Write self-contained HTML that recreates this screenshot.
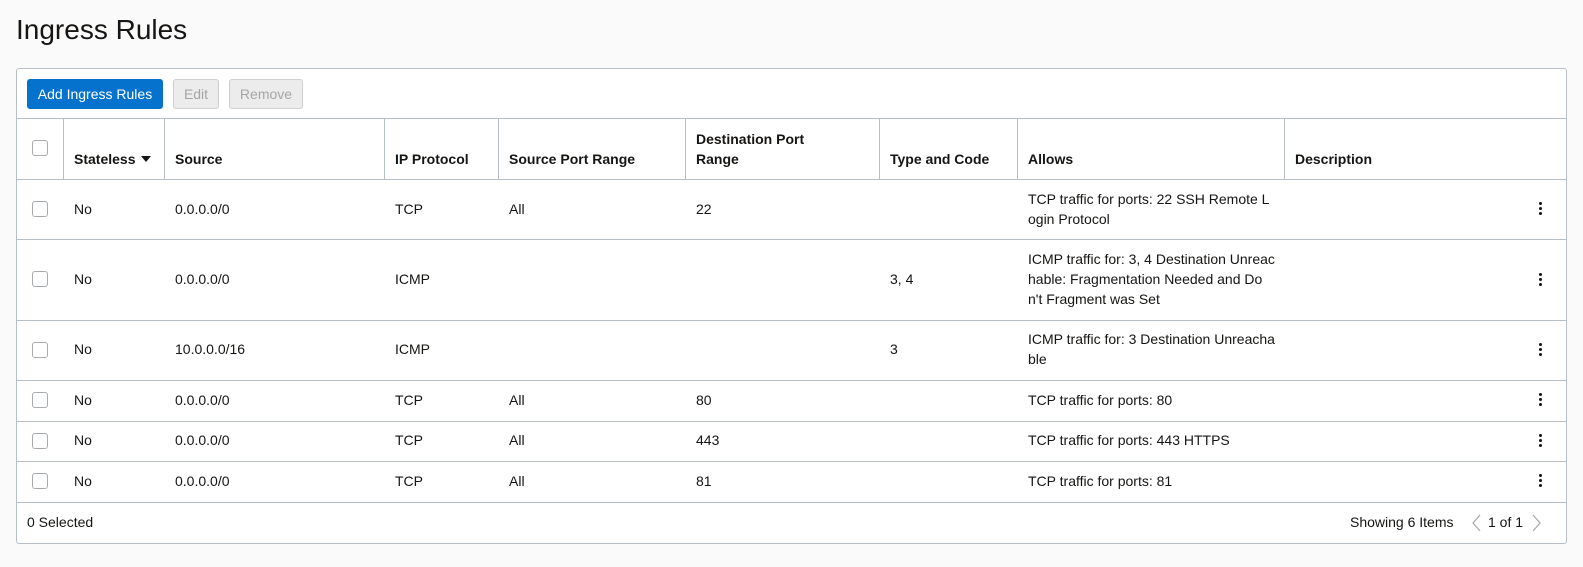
<!DOCTYPE html>
<html><head><style>
*{box-sizing:border-box;margin:0;padding:0}
body{width:1583px;height:567px;background:#fafafa;font-family:"Liberation Sans",sans-serif;color:#161513;font-size:14px;position:relative;overflow:hidden}
h1{position:absolute;left:16px;top:14px;font-size:28px;font-weight:400;color:#161513}
.panel{position:absolute;left:16px;top:68px;width:1551px;height:476px;background:#fff;border:1px solid #b8bec6;border-radius:3px}
.btn{position:absolute;top:10px;height:30px;border-radius:3px;font-size:14px;line-height:28px;text-align:center}
.hl{position:absolute;left:0;width:1549px;height:1px;background:#b8bec6}
.vl{position:absolute;top:50px;width:1px;height:61px;background:#b8bec6}
.t{position:absolute;line-height:20px;white-space:nowrap}
.b{font-weight:700}
.cb{position:absolute;left:15px;width:16px;height:16px;border:1px solid #a9acaf;border-radius:3px;background:#fff}
.dots{position:absolute;left:1522px;width:4px}
.dots i{display:block;width:3px;height:3px;border-radius:50%;background:#161513;margin-bottom:2px}
</style></head><body>
<h1>Ingress Rules</h1>
<div class="panel">
<div class="btn" style="left:10px;width:136px;background:#0572ce;color:#fff;border:1px solid #0572ce">Add Ingress Rules</div>
<div class="btn" style="left:156px;width:46px;background:#ececec;color:#a5a5a5;border:1px solid #cfcfcf">Edit</div>
<div class="btn" style="left:212px;width:74px;background:#ececec;color:#a5a5a5;border:1px solid #cfcfcf">Remove</div>
<div class="hl" style="top:49px"></div>
<div class="vl" style="left:46px"></div><div class="vl" style="left:147px"></div><div class="vl" style="left:367px"></div><div class="vl" style="left:481px"></div><div class="vl" style="left:668px"></div><div class="vl" style="left:862px"></div><div class="vl" style="left:1000px"></div><div class="vl" style="left:1267px"></div>
<div class="cb" style="top:71px"></div>
<div class="t b" style="left:57px;top:80px">Stateless <svg width="10" height="6" style="vertical-align:2px;margin-left:2px"><path d="M0 0 L10 0 L5 6 Z" fill="#161513"/></svg></div>
<div class="t b" style="left:158px;top:80px">Source</div>
<div class="t b" style="left:378px;top:80px">IP Protocol</div>
<div class="t b" style="left:492px;top:80px">Source Port Range</div>
<div class="t b" style="left:679px;top:60px">Destination Port<br>Range</div>
<div class="t b" style="left:873px;top:80px">Type and Code</div>
<div class="t b" style="left:1011px;top:80px">Allows</div>
<div class="t b" style="left:1278px;top:80px">Description</div>
<div class="hl" style="top:110px"></div>

<div class="cb" style="top:132px"></div>
<div class="t" style="left:57px;top:130px">No</div><div class="t" style="left:158px;top:130px">0.0.0.0/0</div><div class="t" style="left:378px;top:130px">TCP</div><div class="t" style="left:492px;top:130px">All</div><div class="t" style="left:679px;top:130px">22</div>
<div class="t" style="left:1011px;top:120px">TCP traffic for ports: 22 SSH Remote L<br>ogin Protocol</div>
<div class="dots" style="top:133px"><i></i><i></i><i></i></div>
<div class="hl" style="top:170px"></div>

<div class="cb" style="top:202px"></div>
<div class="t" style="left:57px;top:200px">No</div><div class="t" style="left:158px;top:200px">0.0.0.0/0</div><div class="t" style="left:378px;top:200px">ICMP</div><div class="t" style="left:873px;top:200px">3, 4</div>
<div class="t" style="left:1011px;top:180px">ICMP traffic for: 3, 4 Destination Unreac<br>hable: Fragmentation Needed and Do<br>n't Fragment was Set</div>
<div class="dots" style="top:204px"><i></i><i></i><i></i></div>
<div class="hl" style="top:251px"></div>

<div class="cb" style="top:273px"></div>
<div class="t" style="left:57px;top:270px">No</div><div class="t" style="left:158px;top:270px">10.0.0.0/16</div><div class="t" style="left:378px;top:270px">ICMP</div><div class="t" style="left:873px;top:270px">3</div>
<div class="t" style="left:1011px;top:260px">ICMP traffic for: 3 Destination Unreacha<br>ble</div>
<div class="dots" style="top:274px"><i></i><i></i><i></i></div>
<div class="hl" style="top:311px"></div>

<div class="cb" style="top:323px"></div>
<div class="t" style="left:57px;top:321px">No</div><div class="t" style="left:158px;top:321px">0.0.0.0/0</div><div class="t" style="left:378px;top:321px">TCP</div><div class="t" style="left:492px;top:321px">All</div><div class="t" style="left:679px;top:321px">80</div><div class="t" style="left:1011px;top:321px">TCP traffic for ports: 80</div>
<div class="dots" style="top:324px"><i></i><i></i><i></i></div>
<div class="hl" style="top:352px"></div>

<div class="cb" style="top:364px"></div>
<div class="t" style="left:57px;top:361px">No</div><div class="t" style="left:158px;top:361px">0.0.0.0/0</div><div class="t" style="left:378px;top:361px">TCP</div><div class="t" style="left:492px;top:361px">All</div><div class="t" style="left:679px;top:361px">443</div><div class="t" style="left:1011px;top:361px">TCP traffic for ports: 443 HTTPS</div>
<div class="dots" style="top:365px"><i></i><i></i><i></i></div>
<div class="hl" style="top:392px"></div>

<div class="cb" style="top:404px"></div>
<div class="t" style="left:57px;top:402px">No</div><div class="t" style="left:158px;top:402px">0.0.0.0/0</div><div class="t" style="left:378px;top:402px">TCP</div><div class="t" style="left:492px;top:402px">All</div><div class="t" style="left:679px;top:402px">81</div><div class="t" style="left:1011px;top:402px">TCP traffic for ports: 81</div>
<div class="dots" style="top:405px"><i></i><i></i><i></i></div>
<div class="hl" style="top:433px"></div>
<div class="t" style="left:10px;top:443px">0 Selected</div>
<div class="t" style="left:1333px;top:443px">Showing 6 Items</div>
<svg style="position:absolute;left:1453px;top:445px" width="12" height="18"><path d="M10 1 L3 9 L10 17" fill="none" stroke="#aaa" stroke-width="1.3"/></svg>
<div class="t" style="left:1471px;top:443px">1 of 1</div>
<svg style="position:absolute;left:1514px;top:445px" width="12" height="18"><path d="M2 1 L9 9 L2 17" fill="none" stroke="#aaa" stroke-width="1.3"/></svg>
</div>
</body></html>
